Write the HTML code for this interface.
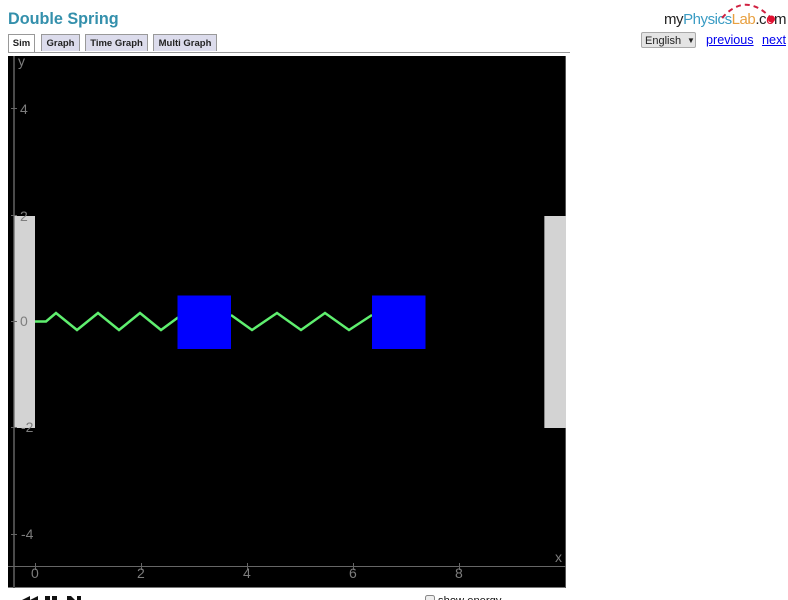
<!DOCTYPE html>
<html>
<head>
<meta charset="utf-8">
<style>
html,body{margin:0;padding:0;background:#fff;width:788px;height:600px;overflow:hidden;font-family:"Liberation Sans",sans-serif}
.a{position:absolute}
#t{left:8px;top:9px;font-size:16.2px;font-weight:bold;color:#3490ac;line-height:20px;white-space:nowrap}
.tab{position:absolute;top:34px;height:16px;background:#dcdcec;border:1px solid #999;border-bottom:none;font-size:9.5px;font-weight:bold;color:#222;line-height:18px;text-align:center;box-sizing:content-box}
#l{left:664px;top:10px;font-size:15px;line-height:20px;white-space:nowrap;color:#222;letter-spacing:-.45px}
</style>
</head>
<body>
<div class="a" id="t">Double Spring</div>
<div class="tab" style="left:8px;width:25px;background:#fff;height:18px">Sim</div>
<div class="tab" style="left:41px;width:37px">Graph</div>
<div class="tab" style="left:85px;width:61px">Time Graph</div>
<div class="tab" style="left:153px;width:62px">Multi Graph</div>
<div class="a" style="left:8px;top:52px;width:562px;height:1px;background:#999"></div>
<div class="a" id="l">my<span style="color:#3a9cc4">Physics</span><span style="color:#e8a040">Lab</span>.c<span style="color:#e01030">o</span>m</div>
<svg class="a" style="left:700px;top:0" width="88" height="30"><path d="M22 18Q45 -8 70 17" fill="none" stroke="#d02040" stroke-width="2" stroke-dasharray="5 4"/><circle cx="71.500" cy="19" r="3.500" fill="#e01030"/></svg>
<div class="a" style="left:641px;top:32px;height:14px;background:#e4e4e4;border:1px solid #aaa;border-radius:2px;font-size:11px;line-height:16px;color:#222;padding-left:3px;box-sizing:content-box;width:50px">English<span style="position:absolute;left:45px;top:0;font-size:8px">▼</span></div>
<a class="a" style="left:706px;top:32px;font-size:12.6px;line-height:17px;color:#00e;text-decoration:underline">previous</a>
<a class="a" style="left:762px;top:32px;font-size:12.7px;line-height:17px;color:#00e;text-decoration:underline">next</a>

<svg class="a" style="left:0;top:0" width="788" height="600" font-family="Liberation Sans, sans-serif">
<rect x="8" y="56" width="558" height="532" fill="#000"/>
<rect x="8" y="587" width="558" height="1" fill="#777"/>
<rect x="565" y="56" width="1" height="532" fill="#555"/>
<rect x="13" y="56" width="2" height="532" fill="#4a4a4a"/>
<rect x="14.500" y="216" width="20.500" height="212" fill="#d3d3d3"/>
<rect x="544" y="216" width="22" height="212" fill="#d3d3d3"/>
<rect x="544" y="216" width="1" height="212" fill="#888"/>
<g stroke="#666" stroke-width="1" fill="none">
<path d="M8 566.500H566"/>
<path d="M11 108.500H17M11 215.500H17M11 321.500H17M11 427.500H17M11 534.500H17"/>
<path d="M35.500 563V570M141.500 563V570M247.500 563V570M353.500 563V570M459.500 563V570"/>
</g>
<g fill="#7d7d7d" font-size="14">
<text x="18" y="66">y</text>
<text x="20" y="114">4</text>
<text x="20" y="221">2</text>
<text x="20" y="326">0</text>
<text x="21" y="432">-2</text>
<text x="21" y="539">-4</text>
<text x="31" y="578">0</text>
<text x="137" y="578">2</text>
<text x="243" y="578">4</text>
<text x="349" y="578">6</text>
<text x="455" y="578">8</text>
<text x="555" y="562">x</text>
</g>
<polyline points="35,321.500 46,321.500 56,313 77,330 98,313 119,330 140,313 161,330 178,317.500" fill="none" stroke="#5fef6f" stroke-width="2.500"/>
<polyline points="231,315 252,330 277,313 301,330 325,313 349,330 372,315" fill="none" stroke="#5fef6f" stroke-width="2.500"/>
<rect x="177.500" y="295.500" width="53.500" height="53.500" fill="#0000ff"/>
<rect x="372" y="295.500" width="53.500" height="53.500" fill="#0000ff"/>
<g fill="#111">
<path d="M22 600L30 596V600ZM30 600L38 596V600Z"/>
<rect x="45" y="596" width="5" height="4"/>
<rect x="52" y="596" width="5" height="4"/>
<path d="M67 596H71L75 600H67ZM77 596H81V600H77Z"/>
</g>
<rect x="425.500" y="595.500" width="9" height="9" rx="2" fill="#eee" stroke="#888"/>
<text x="438" y="604" font-size="11.200" fill="#111">show energy</text>
</svg>
</body>
</html>
